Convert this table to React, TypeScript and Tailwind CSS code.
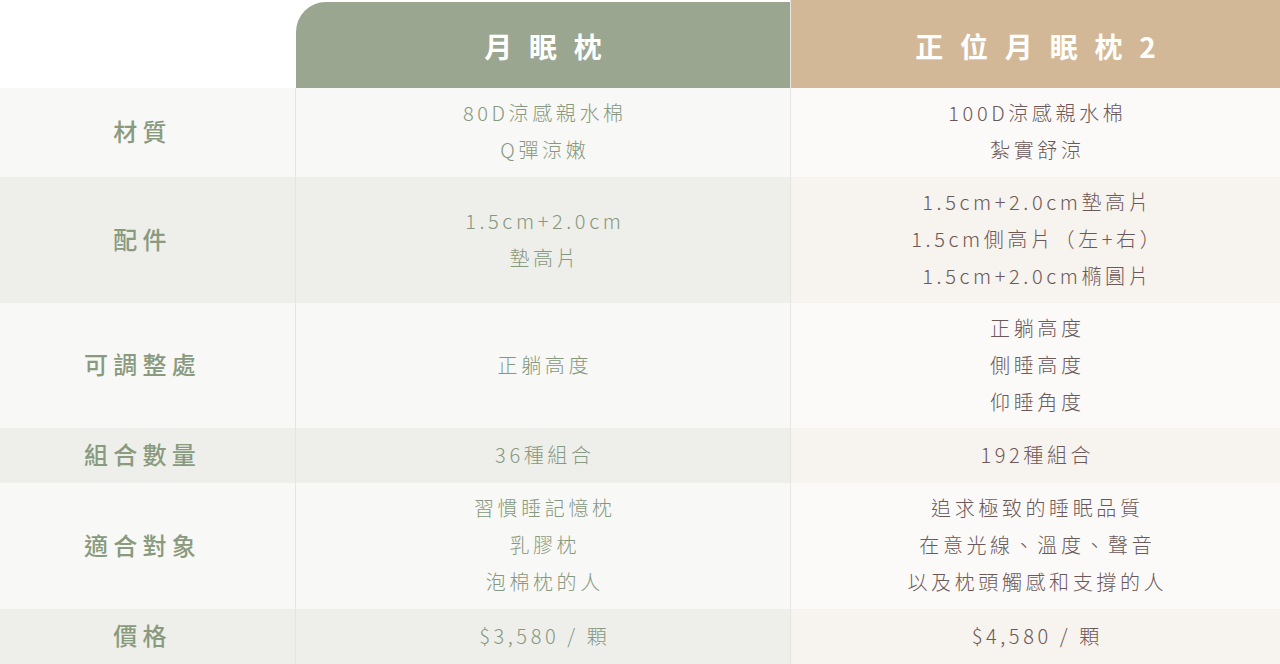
const ROWS = [
  {
    label: "材質",
    h: "h-[89px]",
    alt: false,
    a: ["80D涼感親水棉", "Q彈涼嫩"],
    b: ["100D涼感親水棉", "紮實舒涼"],
  },
  {
    label: "配件",
    h: "h-[126px]",
    alt: true,
    a: ["1.5cm+2.0cm", "墊高片"],
    b: ["1.5cm+2.0cm墊高片", "1.5cm側高片（左+右）", "1.5cm+2.0cm橢圓片"],
  },
  {
    label: "可調整處",
    h: "h-[125px]",
    alt: false,
    a: ["正躺高度"],
    b: ["正躺高度", "側睡高度", "仰睡角度"],
  },
  {
    label: "組合數量",
    h: "h-[55px]",
    alt: true,
    a: ["36種組合"],
    b: ["192種組合"],
  },
  {
    label: "適合對象",
    h: "h-[126px]",
    alt: false,
    a: ["習慣睡記憶枕", "乳膠枕", "泡棉枕的人"],
    b: ["追求極致的睡眠品質", "在意光線、溫度、聲音", "以及枕頭觸感和支撐的人"],
  },
  {
    label: "價格",
    h: "h-[55px]",
    alt: true,
    a: ["$3,580 / 顆"],
    b: ["$4,580 / 顆"],
  },
];

const font = "font-['Noto_Sans_CJK_TC','Noto_Sans',sans-serif]";

export default function App() {
  return (
    <div className={`w-[1280px] h-[664px] overflow-hidden bg-white ${font}`}>
      <div className="grid grid-cols-[295px_1px_494px_1px_1fr] h-[88px]">
        <div className="bg-white" />
        <div className="bg-white" />
        <div className="mt-[2px] flex items-center justify-center rounded-tl-[30px] bg-[#9aa690] pt-[1px]">
          <span className="pl-[0.6em] text-[28px] font-semibold tracking-[0.6em] text-white">月眠枕</span>
        </div>
        <div className="bg-[#e6e6e2]" />
        <div className="flex items-center justify-center bg-[#d2b896] pt-[3px]">
          <span className="pl-[0.6em] text-[28px] font-semibold tracking-[0.6em] text-white">正位月眠枕2</span>
        </div>
      </div>
      {ROWS.map((r) => (
        <div key={r.label} className={`grid grid-cols-[295px_1px_494px_1px_1fr] ${r.h}`}>
          <div
            className={`flex items-center justify-center pb-[3px] pr-[10px] text-[24px] font-medium tracking-[0.22em] text-[#8a9a7e] ${
              r.alt ? "bg-[#eeefeb]" : "bg-[#f8f8f6]"
            }`}
          >
            {r.label}
          </div>
          <div className="bg-[#e4e4e0]" />
          <div
            className={`flex flex-col items-center justify-center pb-[3px] pl-[0.18em] text-[20px] font-light leading-[37px] tracking-[0.18em] text-[#879880] ${
              r.alt ? "bg-[#eeefeb]" : "bg-[#f8f8f6]"
            }`}
          >
            {r.a.map((t) => (
              <span key={t}>{t}</span>
            ))}
          </div>
          <div className="bg-[#e6e6e2]" />
          <div
            className={`flex flex-col items-center justify-center pb-[3px] pl-[0.18em] text-[20px] font-light leading-[37px] tracking-[0.18em] text-[#6b5858] ${
              r.alt ? "bg-[#f7f3ef]" : "bg-[#fbfaf8]"
            }`}
          >
            {r.b.map((t) => (
              <span key={t}>{t}</span>
            ))}
          </div>
        </div>
      ))}
    </div>
  );
}
